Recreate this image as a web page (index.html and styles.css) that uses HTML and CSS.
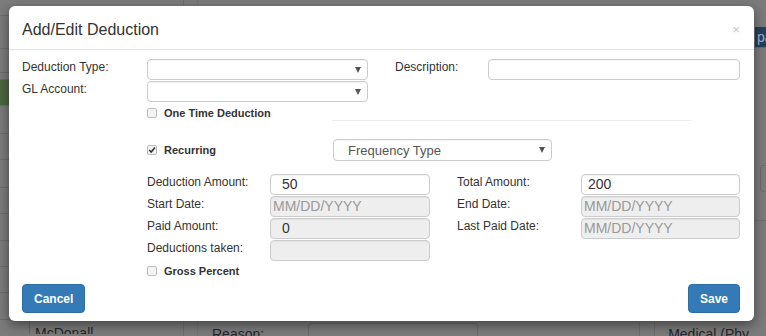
FILE: index.html
```html
<!DOCTYPE html>
<html lang="en">
<head>
  <meta charset="UTF-8">
  <title>Add/Edit Deduction</title>
  <link rel="stylesheet" href="styles.css">
</head>
<body>

<div class="page">
  <div class="page-left">
    <div class="strip-row h16"></div>
    <div class="strip-row h33"></div>
    <div class="strip-row h24"></div>
    <div class="strip-row h7"></div>
    <div class="strip-row h26 active"></div>
    <div class="strip-row h28"></div>
    <div class="strip-row h26"></div>
    <div class="strip-row h28"></div>
    <div class="strip-row h26"></div>
    <div class="strip-row h27"></div>
    <div class="strip-row h26"></div>
    <div class="strip-row h26"></div>
    <div class="strip-row h27"></div>
    <div class="strip-last"><span class="strip-name">McDonall</span></div>
  </div>
  <div class="page-right">
    <div class="top-actions"><span class="page-btn">pay</span></div>
    <div class="detail"><span class="ghost-input"></span></div>
    <div class="detail-rest"></div>
    <div class="info-row">
      <span class="info-label">Reason:</span>
      <span class="info-box"></span>
      <span class="info-sep"></span>
      <span class="info-value">Medical (Phy</span>
    </div>
  </div>
</div>

<div class="modal">
  <div class="modal-header">
    <h4 class="modal-title">Add/Edit Deduction</h4>
    <span class="close">&times;</span>
  </div>

  <div class="modal-body">
    <div class="form-row">
      <label class="lbl lbl-main">Deduction Type:</label>
      <div class="select sel-main"><span class="caret"></span></div>
      <label class="lbl lbl-desc">Description:</label>
      <div class="input inp-desc"></div>
    </div>
    <div class="form-row row-gl">
      <label class="lbl lbl-main">GL Account:</label>
      <div class="select sel-main"><span class="caret"></span></div>
    </div>

    <div class="check-row">
      <span class="box"></span>
      <span class="check-text">One Time Deduction</span>
    </div>
    <div class="divider"></div>

    <div class="recurring-row">
      <div class="check-row inline">
        <span class="box">
          <svg width="10" height="10" viewBox="0 0 10 10"><path d="M2.2 5 L4.2 7 L7.9 2.6" fill="none" stroke="#333" stroke-width="1.6"/></svg>
        </span>
        <span class="check-text">Recurring</span>
      </div>
      <div class="select sel-freq"><span class="sel-text">Frequency Type</span><span class="caret"></span></div>
    </div>

    <div class="amount-grid">
      <span></span>
      <label class="lbl">Deduction Amount:</label>
      <div class="input val-left">50</div>
      <span></span>
      <label class="lbl">Total Amount:</label>
      <div class="input val-right">200</div>

      <span></span>
      <label class="lbl">Start Date:</label>
      <div class="input readonly placeholder">MM/DD/YYYY</div>
      <span></span>
      <label class="lbl">End Date:</label>
      <div class="input readonly placeholder">MM/DD/YYYY</div>

      <span></span>
      <label class="lbl">Paid Amount:</label>
      <div class="input readonly val-left">0</div>
      <span></span>
      <label class="lbl">Last Paid Date:</label>
      <div class="input readonly placeholder">MM/DD/YYYY</div>

      <span></span>
      <label class="lbl">Deductions taken:</label>
      <div class="input readonly"></div>
    </div>

    <div class="check-row gross">
      <span class="box"></span>
      <span class="check-text">Gross Percent</span>
    </div>

    <div class="modal-footer">
      <button class="btn">Cancel</button>
      <button class="btn">Save</button>
    </div>
  </div>
</div>

</body>
</html>
```

FILE: styles.css
```css
body {
  margin: 0;
  position: relative;
  width: 766px;
  height: 336px;
  overflow: hidden;
  background-color: #7b7b7b;
  font-family: 'Liberation Sans', Arial, sans-serif;
}

/* dimmed page behind the dialog */
.page {
  display: flex;
  height: 336px;
  overflow: hidden;
}

.page-left {
  width: 183px;
  border-right: 1px solid #6d6d6d;
}

.strip-row {
  border-bottom: 1px solid #6c6c6c;
  box-sizing: border-box;
}

.strip-row.active {
  background-color: #4b6640;
}

.h7 { height: 7px; }
.h16 { height: 16px; }
.h24 { height: 24px; }
.h26 { height: 26px; }
.h27 { height: 27px; }
.h28 { height: 28px; }
.h33 { height: 33px; }

.strip-last {
  margin-left: 29px;
  height: 10px;
  border-left: 1px solid #666;
  padding: 4px 0 0 5px;
  overflow: hidden;
}

.strip-name {
  font-size: 14px;
  line-height: 16px;
  color: #262626;
}

.page-right {
  flex: 1;
  display: flex;
  flex-direction: column;
  margin-left: 13px;
  border-left: 1px solid #737373;
}

.top-actions {
  height: 47px;
  border-bottom: 1px solid #6c6c6c;
  display: flex;
  justify-content: flex-end;
  align-items: flex-end;
}

.page-btn {
  width: 40px;
  height: 20px;
  margin-right: -29px;
  background-color: #21405f;
  color: #a3b3c6;
  font-size: 14px;
  line-height: 20px;
  padding-left: 2px;
  box-sizing: border-box;
}

.detail {
  height: 172px;
  border-bottom: 1px solid #6f6f6f;
  display: flex;
  justify-content: flex-end;
}

.ghost-input {
  width: 30px;
  height: 25px;
  margin-top: 117px;
  margin-right: -26px;
  border: 1px solid #6a6a6a;
  border-radius: 3px;
}

.detail-rest {
  flex: 1;
}

.info-row {
  height: 14px;
  display: flex;
  align-items: flex-start;
  overflow: hidden;
}

.info-label {
  margin-left: 14px;
  font-size: 14px;
  line-height: 16px;
  color: #262626;
  padding-top: 4px;
}

.info-box {
  width: 168px;
  height: 20px;
  margin-left: 44px;
  margin-top: 1px;
  border: 1px solid #6a6a6a;
  border-radius: 3px;
}

.info-sep {
  width: 14px;
  height: 20px;
  margin-left: 161px;
  border-left: 1px solid #6d6d6d;
  border-right: 1px solid #6d6d6d;
}

.info-value {
  margin-left: 13px;
  font-size: 14px;
  line-height: 16px;
  color: #262626;
  padding-top: 4px;
  white-space: nowrap;
}

/* dialog */
.modal {
  position: absolute;
  top: 6px;
  left: 9px;
  width: 745px;
  background-color: #fff;
  border-radius: 6px;
  box-shadow: 0 4px 12px rgba(0, 0, 0, 0.45);
  color: #333;
}

.modal-header {
  display: flex;
  justify-content: space-between;
  padding: 14px 14px 9px 13px;
  border-bottom: 1px solid #e5e5e5;
}

.modal-title {
  margin: 0;
  font-size: 16px;
  font-weight: normal;
  line-height: 20px;
}

.close {
  font-size: 13px;
  line-height: 20px;
  color: #c6c6c6;
}

.modal-body {
  padding: 9px 14px 8px 13px;
}

.form-row {
  display: flex;
  align-items: flex-start;
}

.row-gl {
  margin-top: 1px;
}

.lbl {
  font-size: 12px;
  line-height: 16px;
  white-space: nowrap;
}

.lbl-main {
  width: 125px;
}

.lbl-desc {
  width: 93px;
  margin-left: 27px;
}

.select, .input {
  height: 21px;
  box-sizing: border-box;
  border: 1px solid #ccc;
  border-radius: 4px;
  background-color: #fff;
  box-shadow: inset 0 1px 1px rgba(0, 0, 0, 0.05);
}

.select {
  display: flex;
  align-items: center;
}

.sel-main {
  width: 221px;
}

.inp-desc {
  width: 252px;
}

.caret {
  margin-left: auto;
  margin-right: 6px;
  width: 0;
  height: 0;
  border-left: 3px solid transparent;
  border-right: 3px solid transparent;
  border-top: 6px solid #555;
}

.check-row {
  display: flex;
  align-items: center;
  height: 14px;
  margin-top: 4px;
  margin-left: 125px;
}

.check-row.inline {
  margin: 0;
  width: 311px;
  flex-shrink: 0;
  padding-left: 125px;
  box-sizing: border-box;
}

.box {
  width: 10px;
  height: 10px;
  box-sizing: border-box;
  border: 1px solid #bcbcbc;
  border-radius: 2px;
  background-color: #f3f3f3;
  display: flex;
}

.box svg {
  margin: -1px;
}

.check-text {
  margin-left: 7px;
  font-size: 11px;
  font-weight: bold;
  line-height: 14px;
  color: #333;
}

.divider {
  margin-left: 310px;
  width: 359px;
  border-top: 1px solid #eee;
}

.recurring-row {
  display: flex;
  align-items: center;
  margin-top: 18px;
}

.sel-freq {
  width: 219px;
  height: 22px;
}

.sel-text {
  padding-left: 14px;
  font-size: 13px;
  color: #555;
}

.amount-grid {
  display: grid;
  grid-template-columns: 125px 123px 160px 27px 124px 159px;
  grid-auto-rows: 21px;
  row-gap: 1px;
  margin-top: 13px;
}

.input {
  font-size: 14px;
  line-height: 19px;
  padding-left: 6px;
  color: #333;
}

.input.readonly {
  background-color: #eee;
}

.val-left {
  padding-left: 11px;
}

.placeholder {
  padding-left: 2px;
  color: #999;
}

.gross {
  margin-top: 3px;
}

.modal-footer {
  display: flex;
  justify-content: space-between;
  margin-top: 6px;
}

.btn {
  height: 29px;
  padding: 0 11px;
  border: 1px solid #2e6da4;
  border-radius: 4px;
  background-color: #337ab7;
  color: #fff;
  font-family: 'Liberation Sans', Arial, sans-serif;
  font-size: 12px;
  font-weight: bold;
}
```
